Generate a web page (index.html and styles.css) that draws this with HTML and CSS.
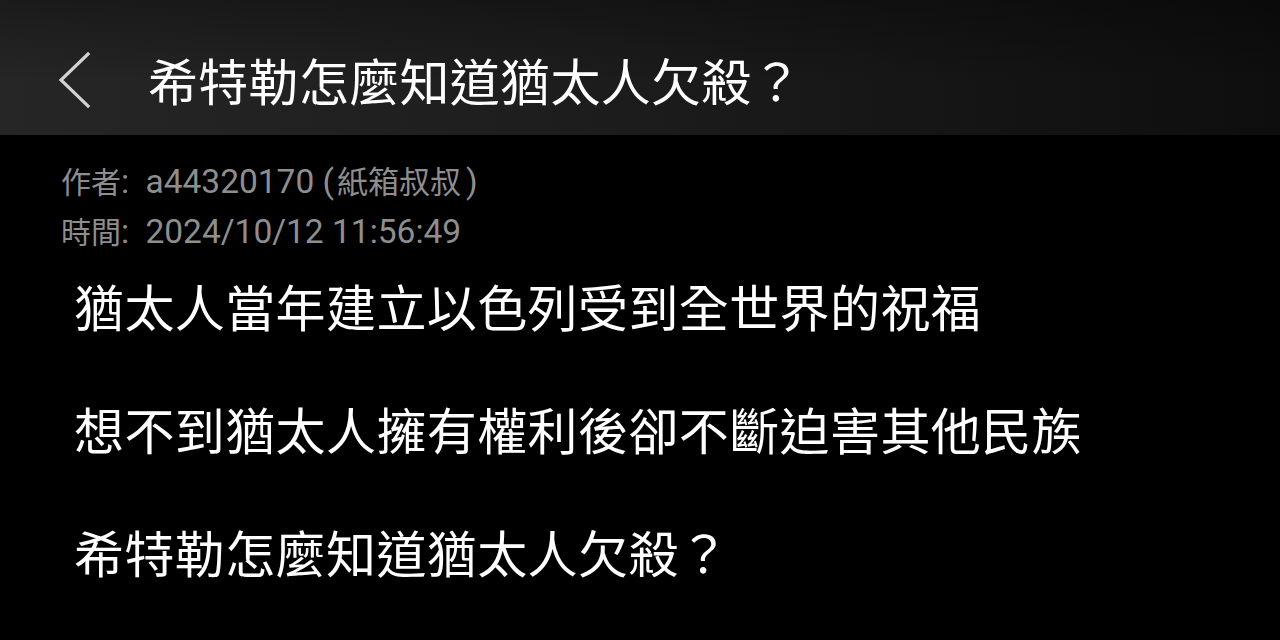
FILE: index.html
```html
<!DOCTYPE html>
<html lang="zh-Hant">
<head>
    <meta charset="UTF-8">
    <meta name="viewport" content="width=device-width, initial-scale=1.0">
    <title>希特勒怎麼知道猶太人欠殺？</title>
    <link rel="stylesheet" href="styles.css">
</head>
<body>

<div class="page">
    <!-- Top bar -->
    <div class="top-bar">
        <a class="back-btn" href="#">
            <svg width="34" height="56" viewBox="0 0 34 56">
                <polyline points="31,2 4,28 31,54" fill="none" stroke="#d2d2d2" stroke-width="3.2" stroke-linecap="square"/>
            </svg>
        </a>
        <h1 class="title">希特勒怎麼知道猶太人欠殺？</h1>
    </div>

    <!-- Post -->
    <div class="post">
        <div class="post-meta">
            <div><span class="label"><span class="cjk">作者</span>:</span> a44320170 (<span class="cjk nick">紙箱叔叔</span>)</div>
            <div><span class="label"><span class="cjk">時間</span>:</span> 2024/10/12 11:56:49</div>
        </div>

        <div class="post-body">
            <p>猶太人當年建立以色列受到全世界的祝福</p>
            <p>想不到猶太人擁有權利後卻不斷迫害其他民族</p>
            <p>希特勒怎麼知道猶太人欠殺？</p>
        </div>
    </div>
</div>

</body>
</html>
```

FILE: styles.css
```css
/* Reset */
* {
    margin: 0;
    padding: 0;
    box-sizing: border-box;
}

body {
    font-family: "Noto Sans CJK TC", "Noto Sans", sans-serif;
    background-color: #000;
    color: #fff;
    width: 1280px;
    height: 640px;
    overflow: hidden;
}

/* Header bar */
.top-bar {
    height: 135px;
    display: flex;
    align-items: center;
    padding-top: 22px;
    padding-left: 57px;
    background:
        linear-gradient(to bottom, rgba(0, 0, 0, 0.3), rgba(0, 0, 0, 0) 60%),
        linear-gradient(to right, #262626, #1d1d1d 45%, #0e0e0e);
}

.back-btn {
    display: flex;
    margin-top: 2px;
}

.title {
    margin-left: 57px;
    font-size: 50px;
    font-weight: 400;
    line-height: 60px;
    letter-spacing: 0.3px;
    color: #fff;
}

/* Post area */
.post {
    padding: 21px 0 0 61px;
}

.post-meta {
    font-family: Roboto, "Noto Sans CJK TC", sans-serif;
    font-size: 33.5px;
    line-height: 48px;
    color: #8e8e8e;
}

.post-meta .cjk {
    font-family: "Noto Sans CJK TC", sans-serif;
    font-size: 30px;
}

.post-meta .nick {
    font-size: 31px;
    padding: 0 5px 0 3px;
}

.post-meta .label {
    margin-right: 8px;
}

.post-body {
    margin-top: 19px;
    padding-left: 13px;
}

.post-body p {
    font-size: 50px;
    line-height: 60px;
    letter-spacing: 0.4px;
    margin-bottom: 63px;
}
```
